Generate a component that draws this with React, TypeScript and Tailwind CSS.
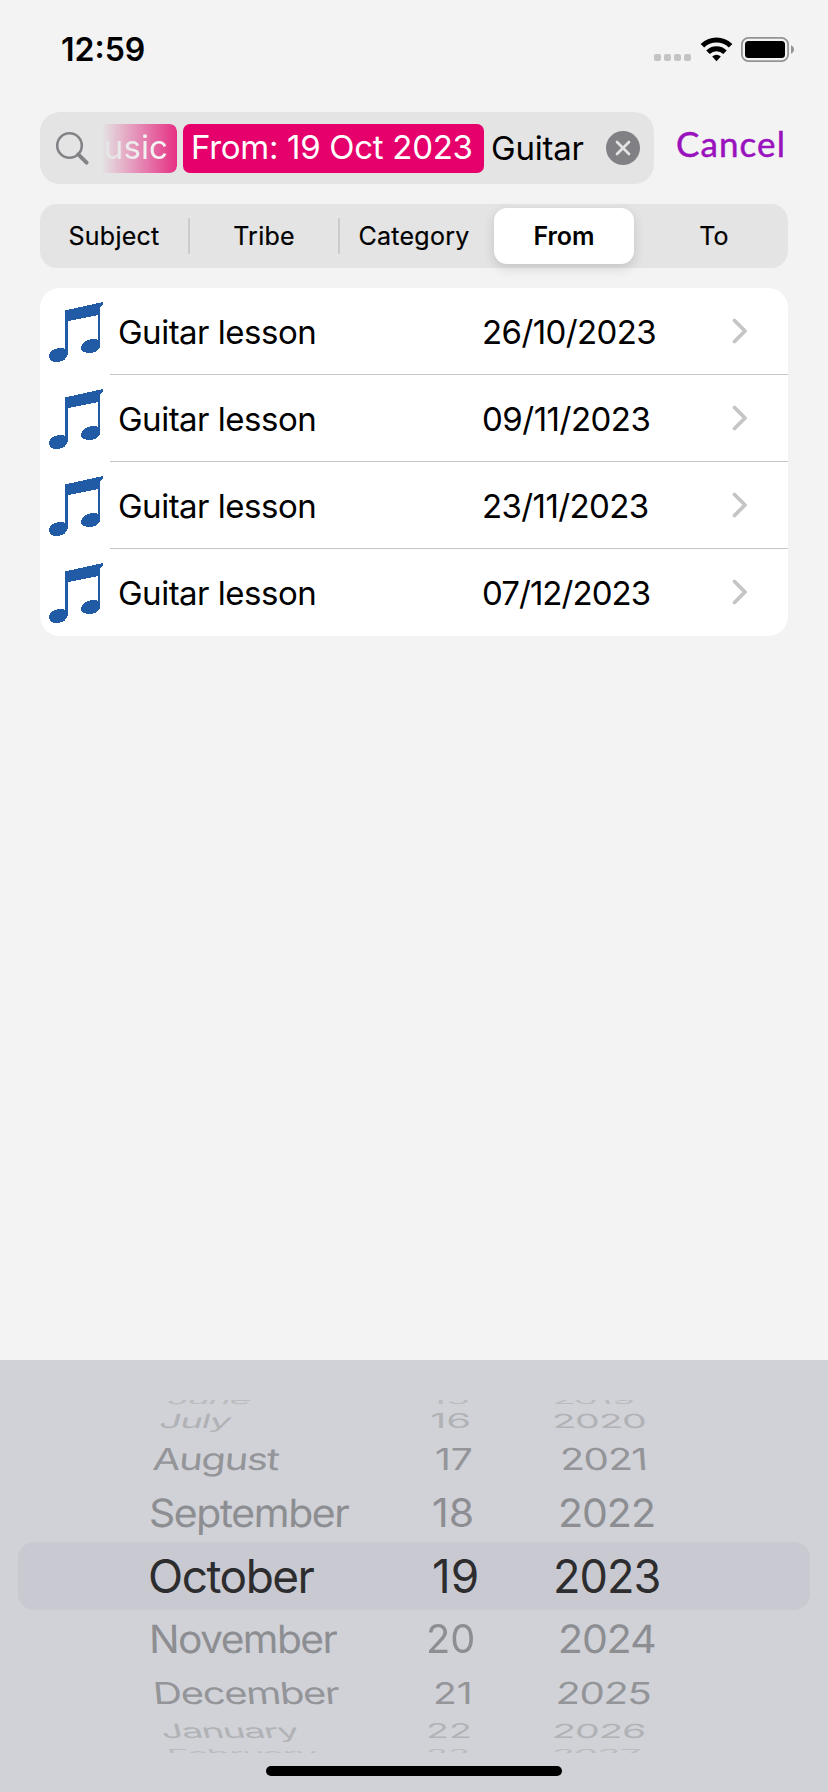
import React from "react";

const segments = ["Subject", "Tribe", "Category", "From", "To"];

const lessons = [
  { date: "26/10/2023", spacing: "tracking-[-0.6px]" },
  { date: "09/11/2023", spacing: "tracking-[-0.5px]" },
  { date: "23/11/2023", spacing: "tracking-[-0.6px]" },
  { date: "07/12/2023", spacing: "tracking-[-0.95px]" },
];

type Cell = [text: string, transform: string];

const wheel: { row: string; cells: [Cell, Cell, Cell] }[] = [
  {
    row: "h-[12px] overflow-hidden [clip-path:inset(4px_0_0_0)] text-[41px] text-[#bbbcc0]",
    cells: [
      ["June", "translate-x-[20px] translate-y-[-3px] [transform:scale(0.92,0.3)_skewX(-10deg)]"],
      ["15", "translate-x-[4px] translate-y-[-3px] [transform:scale(0.96,0.3)]"],
      ["2019", "translate-x-[0px] translate-y-[-3px] [transform:scale(0.93,0.3)_skewX(6deg)]"],
    ],
  },
  {
    row: "h-[26px] text-[41px] text-[#b1b2b6]",
    cells: [
      ["July", "translate-x-[12px] [transform:scale(0.94,0.475)_skewX(-8deg)]"],
      ["16", "translate-x-[4px] [transform:scale(0.98,0.475)]"],
      ["2020", "translate-x-[1px] [transform:scale(0.96,0.475)_skewX(3deg)]"],
    ],
  },
  {
    row: "h-[50px] text-[41px] text-[#949599]",
    cells: [
      ["August", "translate-x-[5px] [transform:scale(0.98,0.74)_skewX(-4deg)]"],
      ["17", "translate-x-[9px] [transform:scale(0.95,0.74)]"],
      ["2021", "translate-x-[9px] [transform:scale(0.98,0.74)_skewX(3deg)]"],
    ],
  },
  {
    row: "h-[58px] text-[41px] text-[#8d8e92]",
    cells: [
      ["September", "translate-x-[1px] [transform:scale(1,0.95)_skewX(-1deg)]"],
      ["18", "translate-x-[6px] [transform:scale(1,0.95)]"],
      ["2022", "translate-x-[7px] [transform:scale(1,0.95)_skewX(1deg)]"],
    ],
  },
  {
    row: "h-[68px] text-[46px] text-[#2d2d2f]",
    cells: [
      ["October", ""],
      ["19", "translate-x-[6px]"],
      ["2023", "translate-x-[2px] [transform:scale(0.98,1)]"],
    ],
  },
  {
    row: "h-[58px] text-[41px] text-[#8d8e92]",
    cells: [
      ["November", "translate-x-[1px] [transform:scale(0.99,0.95)_skewX(1deg)]"],
      ["20", "translate-x-[0px] [transform:scale(0.97,0.95)]"],
      ["2024", "translate-x-[7px] [transform:scale(1,0.95)_skewX(-1deg)]"],
    ],
  },
  {
    row: "h-[50px] text-[41px] text-[#949599]",
    cells: [
      ["December", "translate-x-[5px] [transform:scale(0.98,0.74)_skewX(4deg)]"],
      ["21", "translate-x-[7px] [transform:scale(0.95,0.74)]"],
      ["2025", "translate-x-[5px] [transform:scale(0.98,0.74)_skewX(-3deg)]"],
    ],
  },
  {
    row: "h-[26px] text-[41px] text-[#b1b2b6]",
    cells: [
      ["January", "translate-x-[13px] [transform:scale(0.93,0.475)_skewX(8deg)]"],
      ["22", "translate-x-[0px] [transform:scale(0.92,0.475)]"],
      ["2026", "translate-x-[1px] [transform:scale(0.96,0.475)_skewX(-3deg)]"],
    ],
  },
  {
    row: "h-[12px] overflow-hidden [clip-path:inset(0_0_3px_0)] text-[41px] text-[#bbbcc0]",
    cells: [
      ["February", "translate-x-[20px] translate-y-[3px] [transform:scale(0.92,0.3)_skewX(10deg)]"],
      ["23", "translate-x-[0px] translate-y-[3px] [transform:scale(0.88,0.3)]"],
      ["2027", "translate-x-[0px] translate-y-[3px] [transform:scale(0.93,0.3)_skewX(-6deg)]"],
    ],
  },
];

function StatusBar() {
  return (
    <header className="flex h-[112px] items-start justify-between pt-[30px] pr-[33px] pl-[61px]">
      <span className="text-[32px] leading-[40px] font-semibold">12:59</span>
      <div className="flex h-[38px] items-center">
        <div className="mt-[17px] mr-[9px] flex gap-[3px]">
          {[0, 1, 2, 3].map((dot) => (
            <span key={dot} className="size-[7px] rounded-[2px] bg-[#c4c4c4]" />
          ))}
        </div>
        <svg width="33" height="25" viewBox="0 0 33 25" className="mr-[8px]" fill="none" stroke="#000" strokeWidth="5">
          <path d="M2.4 8.8a20 20 0 0 1 28.2 0" />
          <path d="M8 15.2a12 12 0 0 1 17 0" />
          <path d="M16.5 24.2l-4.3-4.6a6.2 6.2 0 0 1 8.6 0z" fill="#000" stroke="none" />
        </svg>
        <svg width="54" height="25" viewBox="0 0 54 25">
          <rect x="0.9" y="0.9" width="46.2" height="23.2" rx="6.5" fill="none" stroke="#949494" strokeWidth="1.8" />
          <rect x="4" y="4" width="40" height="17" rx="3.5" fill="#000" />
          <path d="M50 8.2c1.9.8 3 2.4 3 4.3s-1.1 3.5-3 4.3z" fill="#949494" />
        </svg>
      </div>
    </header>
  );
}

function SearchBar() {
  return (
    <div className="flex h-[72px] items-center pl-[40px]">
      <div className="flex h-[72px] w-[614px] shrink-0 items-center rounded-[20px] bg-[#e4e4e4] pl-[15px] text-[33px] leading-[47px]">
        <svg width="35" height="35" viewBox="0 0 35 35" fill="none" stroke="#838387" className="shrink-0">
          <circle cx="14.5" cy="14.5" r="12.3" strokeWidth="2.6" />
          <path d="M23.3 23.3l8.3 8.3" strokeWidth="4" strokeLinecap="round" />
        </svg>
        <div className="ml-[12px] flex h-[49px] w-[75px] shrink-0 justify-end overflow-hidden rounded-r-[7px] bg-[#e6006b] pr-[9px] text-white [mask-image:linear-gradient(to_right,transparent,black_95px)]">
          <span className="tracking-[0.1px]">Music</span>
        </div>
        <div className="ml-[6px] h-[49px] w-[301px] shrink-0 rounded-[7px] bg-[#e6006b] pl-[8px] whitespace-nowrap text-white">
          <span className="tracking-[-0.3px]">From: 19 Oct 2023</span>
        </div>
        <span className="ml-[7px] w-[115px] shrink-0 tracking-[-0.2px]">Guitar</span>
        <svg width="34" height="34" viewBox="0 0 34 34" className="shrink-0">
          <circle cx="17" cy="17" r="17" fill="#808085" />
          <path d="M11 11l12 12M23 11L11 23" stroke="#e4e4e4" strokeWidth="2.7" strokeLinecap="round" />
        </svg>
      </div>
      <button className="ml-[22px] pb-[10px] font-['Lato',sans-serif] text-[35px] leading-[40px] tracking-[1.1px] text-[#9a12bd] [-webkit-text-stroke:0.5px_#9a12bd]">
        Cancel
      </button>
    </div>
  );
}

function Segments() {
  return (
    <nav className="mx-[40px] mt-[20px] flex h-[64px] items-center rounded-[17px] bg-[#e4e4e4] text-[25px]">
      {segments.map((name, i) => (
        <React.Fragment key={name}>
          {i > 0 && <span className={i < 3 ? "h-[36px] w-[2px] rounded-full bg-[#cbcbcb]" : "w-[2px]"} />}
          <div className="flex h-full flex-1 items-center justify-center">
            {name === "From" ? (
              <span className="flex h-[56px] w-[140px] items-center justify-center rounded-[13px] bg-white pt-[2px] font-semibold shadow-[0_4px_12px_rgba(0,0,0,0.14)]">
                {name}
              </span>
            ) : (
              <span className="pt-[2px] tracking-[0.25px] [-webkit-text-stroke:0.2px_black]">{name}</span>
            )}
          </div>
        </React.Fragment>
      ))}
    </nav>
  );
}

function NoteIcon() {
  return (
    <svg width="54" height="60" viewBox="0 0 54 60" fill="#215ba6" shapeRendering="crispEdges">
      <path d="M16 8.5L54 0v2.5l-3 2.5v39c0 3-4 7-10 7-6 .2-9-2.500-9-5 0-5 6-9 12-9 2 0 4 .4 5 1V13L19 19v32c0 5-5 9-11 9-5 0-8-2.500-8-5.500 0-5 5-8.500 11-8.500 2 0 4 .4 5 1z" />
    </svg>
  );
}

function Lessons() {
  return (
    <main className="mx-[40px] mt-[20px] overflow-hidden rounded-[20px] bg-white">
      {lessons.map(({ date, spacing }, i) => (
        <div key={date} className="flex h-[87px] pl-[9px]">
          <div className="w-[61px] shrink-0 pt-[14px]">
            <NoteIcon />
          </div>
          <div className={`flex flex-1 items-center border-b pl-[8px] text-[33px] ${i < 3 ? "border-[#c5c5c7]" : "border-transparent"}`}>
            <span className="w-[364px] pt-[3px] tracking-[-0.5px]">Guitar lesson</span>
            <span className={`w-[250px] pt-[3px] ${spacing}`}>{date}</span>
            <svg width="16" height="26" viewBox="0 0 16 26" fill="none" stroke="#c5c5c7" strokeWidth="3.8" strokeLinecap="round" strokeLinejoin="round">
              <path d="M2.5 2.5L13 13 2.5 23.5" />
            </svg>
          </div>
        </div>
      ))}
    </main>
  );
}

function DateWheel() {
  return (
    <section className="flex h-[432px] flex-col bg-[#d1d2d8] px-[18px] pt-[36px]">
      {wheel.map(({ row, cells }, i) => (
        <div
          key={cells[0][0]}
          className={`flex shrink-0 items-center rounded-[16px] pl-[130px] leading-none ${row} ${i === 4 ? "bg-[#c9cad1]" : ""}`}
        >
          {cells.map(([text, transform], column) => (
            <div
              key={text}
              className={
                column === 0
                  ? "flex w-[278px] tracking-[-1.5px]"
                  : column === 1
                    ? "flex w-[125px]"
                    : "flex tracking-[-1px]"
              }
            >
              <span className={`inline-block origin-left ${transform}`}>{text}</span>
            </div>
          ))}
        </div>
      ))}
      <div className="mx-auto mt-[10px] h-[10px] w-[296px] rounded-full bg-black" />
    </section>
  );
}

export default function App() {
  return (
    <div className="flex h-[1792px] w-[828px] flex-col overflow-hidden bg-[#f3f3f3] font-['Inter',sans-serif] text-black">
      <StatusBar />
      <SearchBar />
      <Segments />
      <Lessons />
      <div className="flex-1" />
      <DateWheel />
    </div>
  );
}
